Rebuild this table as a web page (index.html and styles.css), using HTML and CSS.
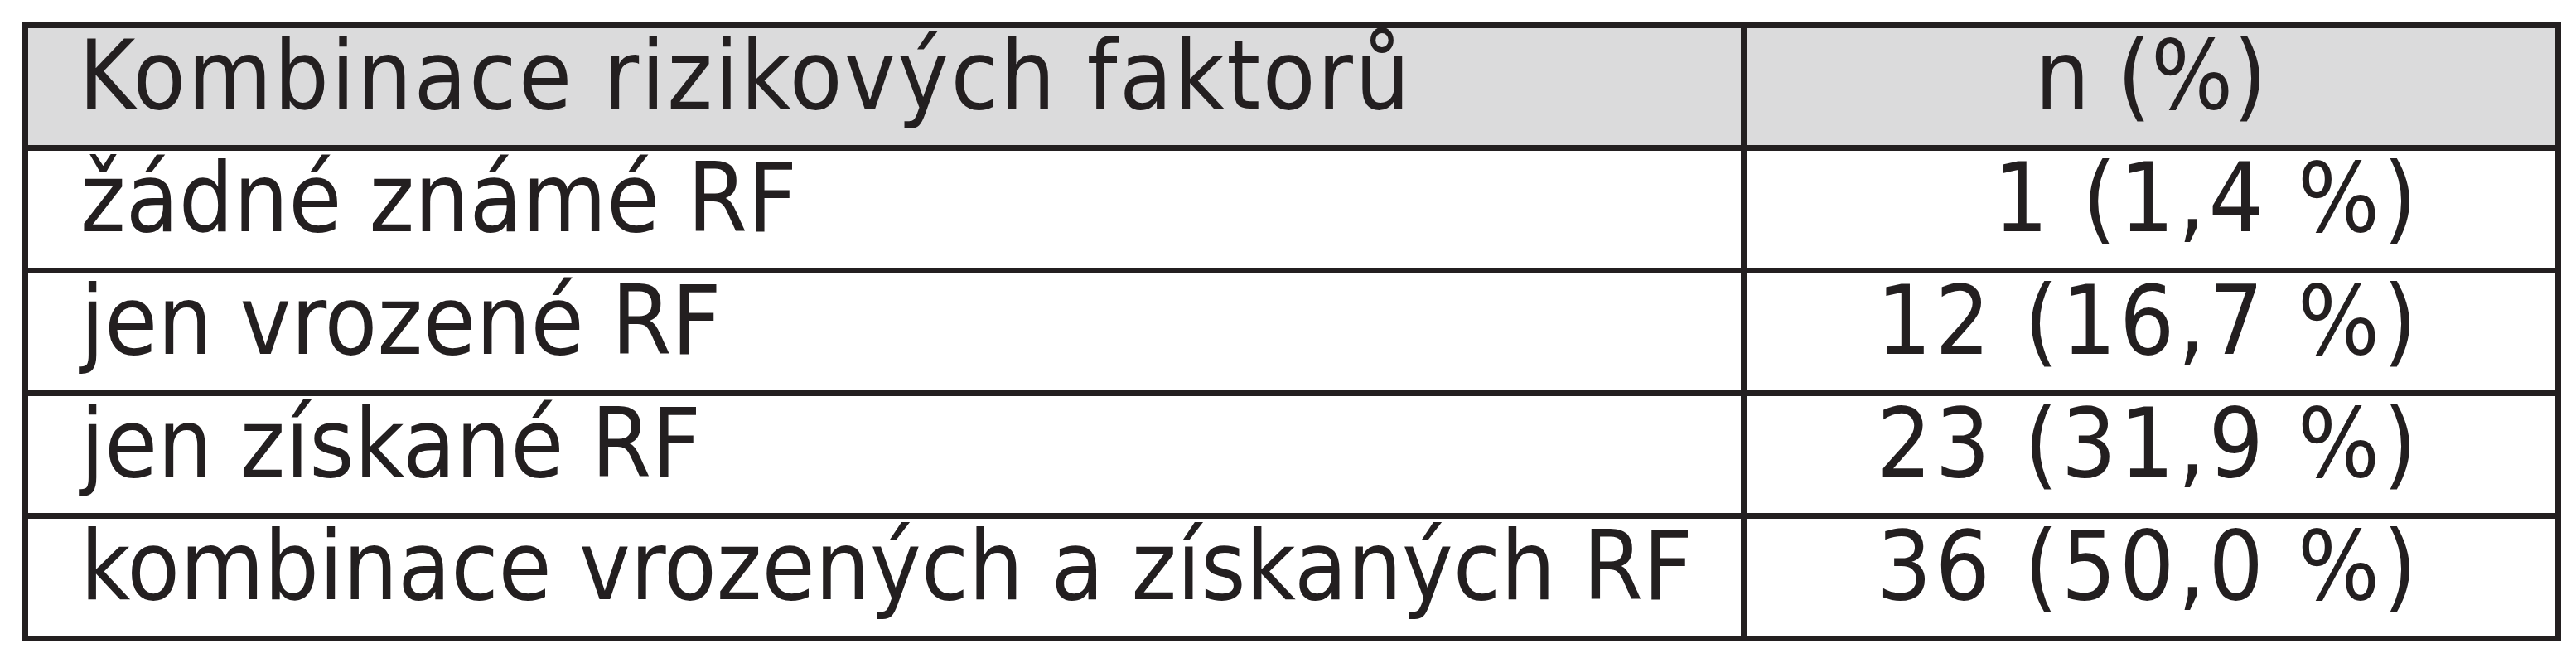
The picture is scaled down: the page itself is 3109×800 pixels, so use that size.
FILE: index.html
```html
<!DOCTYPE html>
<html lang="cs">
<head>
<meta charset="utf-8">
<title>Kombinace rizikových faktorů</title>
<link rel="stylesheet" href="styles.css">
</head>
<body>
<div class="table">
  <div class="cell head label">Kombinace rizikových faktorů</div>
  <div class="cell head num-head">n (%)</div>

  <div class="cell label">žádné známé RF</div>
  <div class="cell num">1 (1,4 %)</div>

  <div class="cell label">jen vrozené RF</div>
  <div class="cell num">12 (16,7 %)</div>

  <div class="cell label">jen získané RF</div>
  <div class="cell num">23 (31,9 %)</div>

  <div class="cell label">kombinace vrozených a získaných RF</div>
  <div class="cell num">36 (50,0 %)</div>
</div>
</body>
</html>
```

FILE: styles.css
```css
html, body {
  margin: 0;
  padding: 0;
  background: #ffffff;
}

body {
  padding: 27px 0 0 27px;
  font-family: "DejaVu Sans Condensed", "DejaVu Sans", sans-serif;
  font-stretch: condensed;
  color: #231f20;
}

.table {
  display: grid;
  grid-template-columns: 2067px 976px;
  grid-auto-rows: 141px;
  gap: 7px;
  padding: 7px;
  width: max-content;
  background: #231f20;
}

.cell {
  background: #ffffff;
  font-size: 116px;
  line-height: 114px;
  white-space: nowrap;
}

.head {
  background: #dbdbdc;
}

.label {
  padding-left: 63px;
}

.head.label {
  padding-left: 61px;
  letter-spacing: 2.5px;
}

.num-head {
  text-align: center;
}

.num {
  text-align: right;
  padding-right: 163px;
  letter-spacing: 4px;
}
```
